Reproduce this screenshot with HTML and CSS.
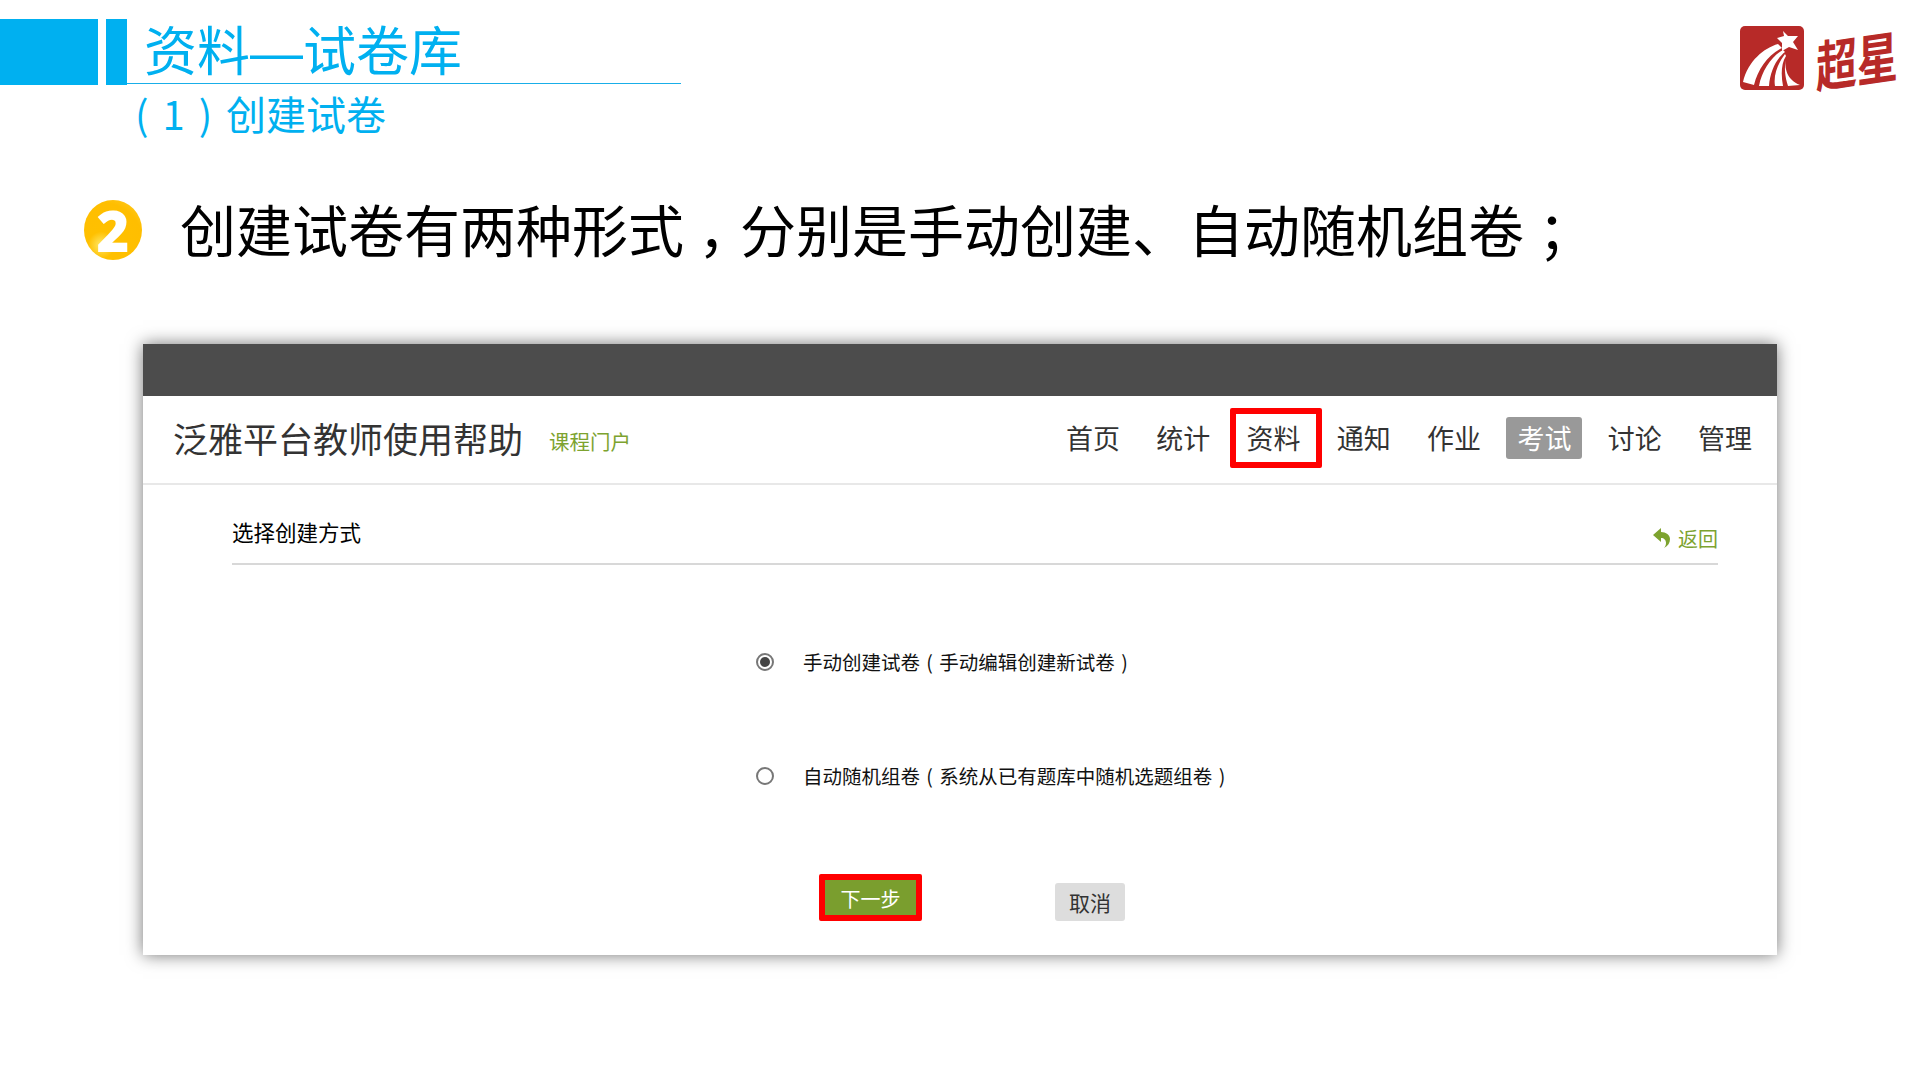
FILE: index.html
```html
<!DOCTYPE html>
<html lang="zh-CN">
<head>
    <meta charset="UTF-8">
    <title>资料—试卷库</title>
    <link rel="stylesheet" href="styles.css">
</head>
<body>
    <div class="slide">
        <header class="slide-head">
            <div class="bar-wide"></div>
            <div class="bar-narrow"></div>
            <h1 class="slide-title">资料—试卷库</h1>
            <div class="logo">
                <svg class="logo-mark" viewBox="0 0 64 64" width="64" height="64">
                    <rect width="64" height="64" rx="5" fill="#b72a28"/>
                    <path d="M43 5l5 5 10 0-5 6 5 8-9-3-7 4 0-8-5-5 7-2z" fill="#fff"/>
                    <path d="M38 18C24 22 8 35 3 56L14 59C18 43 28 29 42 22Z" fill="#fff"/>
                    <path d="M43 24C32 30 22 44 19 60L29 60C30 46 36 33 45 26Z" fill="#fff"/>
                    <path d="M45 28C39 36 33 48 35 60L43 60C41 49 41 38 46 30Z" fill="#fff"/>
                    <path d="M46 32C44 42 47 54 60 59L48 60C45 51 44 42 46 32Z" fill="#fff"/>
                </svg>
                <span class="logo-text">超星</span>
            </div>
        </header>
        <h2 class="slide-sub">( 1 ) 创建试卷</h2>
        <div class="point">
            <span class="point-num">2</span>
            <p class="point-text">创建试卷有两种形式<span class="punct">，</span>分别是手动创建、自动随机组卷<span class="punct">；</span></p>
        </div>

        <div class="shot">
            <div class="shot-top"></div>
            <div class="course-bar">
                <span class="course-name">泛雅平台教师使用帮助</span>
                <a class="course-link">课程门户</a>
                <nav class="course-nav">
                    <a class="nav-item">首页</a>
                    <a class="nav-item">统计</a>
                    <a class="nav-item marked">资料</a>
                    <a class="nav-item">通知</a>
                    <a class="nav-item">作业</a>
                    <a class="nav-item active">考试</a>
                    <a class="nav-item">讨论</a>
                    <a class="nav-item">管理</a>
                </nav>
            </div>
            <div class="content">
                <div class="content-head">
                    <span class="content-title">选择创建方式</span>
                    <a class="back-link">
                        <svg viewBox="0 0 20 22" width="20" height="22">
                            <path d="M9 1L1 8l8 7v-4c3 0 5 2 5 5 0 2-1 4-2 5 4-2 6-5 6-9 0-4-4-7-9-7z" fill="#7da32f"/>
                        </svg>
                        返回
                    </a>
                </div>
                <div class="option">
                    <span class="radio checked"></span>
                    <span>手动创建试卷 ( 手动编辑创建新试卷 )</span>
                </div>
                <div class="option">
                    <span class="radio"></span>
                    <span>自动随机组卷 ( 系统从已有题库中随机选题组卷 )</span>
                </div>
                <div class="actions">
                    <button class="btn-next">下一步</button>
                    <button class="btn-cancel">取消</button>
                </div>
            </div>
        </div>
    </div>
</body>
</html>
```
FILE: styles.css
```css
* {
    box-sizing: border-box;
}

body {
    margin: 0;
    background: #fff;
    font-family: "Noto Sans CJK SC", "Noto Sans", sans-serif;
    color: #000;
}

.slide {
    width: 1920px;
    height: 1080px;
    overflow: hidden;
    padding-top: 19px;
}

/* slide header */
.slide-head {
    display: flex;
    height: 66px;
}

.bar-wide {
    width: 98px;
    background: #00b0f0;
}

.bar-narrow {
    width: 21px;
    margin-left: 8px;
    background: #00b0f0;
}

.slide-title {
    width: 554px;
    height: 65px;
    margin: 0;
    padding-left: 17px;
    border-bottom: 1px solid #19aee8;
    color: #00b0f0;
    font-family: "Liberation Sans", "Noto Sans CJK SC", sans-serif;
    font-size: 53px;
    font-weight: 400;
    line-height: 67px;
}

.logo {
    display: flex;
    align-items: center;
    gap: 12px;
    margin-left: auto;
    margin-right: 22px;
    height: 76px;
    margin-top: 1px;
}

.logo-text {
    color: #b72a28;
    font-size: 41px;
    font-weight: 700;
    line-height: 1;
    transform: scaleY(1.35) skewY(-6deg);
}

.slide-sub {
    margin: 3px 0 0 135px;
    height: 50px;
    color: #00b0f0;
    font-size: 40px;
    font-weight: 400;
    line-height: 50px;
    word-spacing: 5px;
}

/* numbered point */
.point {
    display: flex;
    align-items: center;
    height: 70px;
    margin: 57px 0 0 84px;
}

.point-num {
    display: flex;
    align-items: center;
    justify-content: center;
    width: 58px;
    height: 60px;
    border-radius: 50%;
    background: radial-gradient(circle at 30% 75%, #ffe96b 0, #ffc000 22%, #ffbe00 70%, #ffcf30 100%);
    color: #fff;
    font-family: "Open Sans", sans-serif;
    font-size: 56px;
    font-weight: 800;
    line-height: 1;
}

.point-text {
    margin: 0 0 4px 38px;
    font-size: 56px;
    line-height: 70px;
    white-space: nowrap;
}

/* these sit in the middle of their em box in the original font */
.punct {
    display: inline-block;
    width: 1em;
    font-feature-settings: "halt";
    text-align: center;
}

/* screenshot of the platform */
.shot {
    width: 1634px;
    height: 611px;
    margin: 79px 0 0 143px;
    background: #fff;
    box-shadow: 0 0 16px rgba(0, 0, 0, 0.55);
}

.shot-top {
    height: 52px;
    background: #4c4c4c;
}

.course-bar {
    display: flex;
    align-items: center;
    height: 89px;
    padding: 0 14px 4px 30px;
    border-bottom: 2px solid #e8e8e8;
}

.course-name {
    color: #333;
    font-size: 35px;
}

.course-link {
    margin: 6px 0 0 26px;
    color: #7da32f;
    font-size: 20.5px;
}

.course-nav {
    display: flex;
    gap: 14.3px;
    margin-left: auto;
}

.nav-item {
    position: relative;
    width: 76px;
    height: 42px;
    border-radius: 3px;
    color: #333;
    font-size: 27px;
    line-height: 42px;
    text-align: center;
}

.nav-item.active {
    background: #999;
    color: #fff;
}

/* red marker boxes drawn over the screenshot */
.nav-item.marked::after {
    content: "";
    position: absolute;
    top: -9px;
    left: -6px;
    width: 80px;
    height: 48px;
    border: 6px solid #f00;
    border-radius: 2px;
}

.content {
    padding: 0 59px 0 89px;
}

.content-head {
    display: flex;
    justify-content: space-between;
    height: 80px;
    padding-top: 32px;
    border-bottom: 2px solid #d8d8d8;
}

.content-title {
    font-size: 21.5px;
    line-height: 30px;
}

.back-link {
    display: flex;
    align-items: center;
    gap: 6px;
    height: 30px;
    margin-top: 6px;
    color: #7da32f;
    font-size: 20px;
}

.option {
    display: flex;
    align-items: center;
    gap: 29px;
    height: 114px;
    margin-left: 524px;
    color: #111;
    font-size: 19.5px;
    word-spacing: 2px;
}

.content-head + .option {
    margin-top: 39px;
}

.radio {
    position: relative;
    width: 18px;
    height: 18px;
    margin-top: 2px;
    border: 2px solid #777;
    border-radius: 50%;
}

.radio.checked::after {
    content: "";
    position: absolute;
    top: 2px;
    left: 2px;
    width: 10px;
    height: 10px;
    border-radius: 50%;
    background: #444;
}

.actions {
    display: flex;
    align-items: flex-start;
    gap: 139px;
    margin: 48px 0 0 593px;
}

.actions button {
    padding: 0;
    border: none;
    font-family: inherit;
}

.btn-next {
    position: relative;
    width: 91px;
    height: 35px;
    background: #7a9e2e;
    color: #fff;
    font-size: 20px;
    line-height: 37px;
}

.btn-next::after {
    content: "";
    position: absolute;
    top: -6px;
    left: -6px;
    width: 91px;
    height: 35px;
    border: 6px solid #f00;
    border-radius: 2px;
}

.btn-cancel {
    width: 70px;
    height: 38px;
    margin-top: 3px;
    border-radius: 3px;
    background: #ddd;
    color: #333;
    font-size: 21px;
    line-height: 38px;
}
```
